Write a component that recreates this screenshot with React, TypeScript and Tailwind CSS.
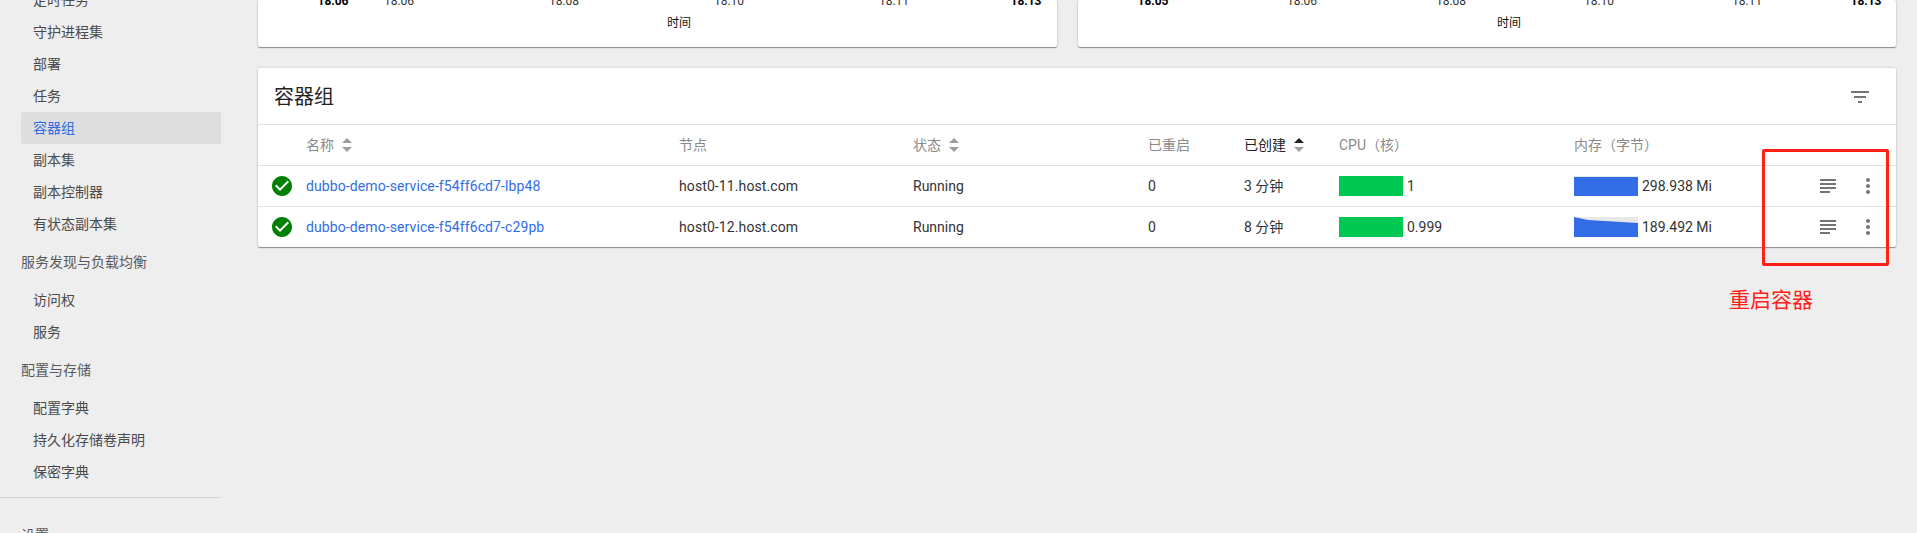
import { MdCheckCircle, MdFilterList, MdMoreVert, MdSubject } from "react-icons/md"

const cardShadow = "shadow-[0_1px_1px_0_rgba(0,0,0,0.38),0_0_3px_0_rgba(0,0,0,0.16)]"

const workloads = ["定时任务", "守护进程集", "部署", "任务", "容器组", "副本集", "副本控制器", "有状态副本集"]
const discovery = ["访问权", "服务"]
const storage = ["配置字典", "持久化存储卷声明", "保密字典"]

const columns = "grid grid-cols-[48px_373px_234px_235px_96px_95px_235px_1fr_auto] items-center"

const pods = [
  { name: "dubbo-demo-service-f54ff6cd7-lbp48", node: "host0-11.host.com", age: "3 分钟", cpu: "1", memory: "298.938 Mi", memTop: "0,1 64,1 64,20 0,20" },
  { name: "dubbo-demo-service-f54ff6cd7-c29pb", node: "host0-12.host.com", age: "8 分钟", cpu: "0.999", memory: "189.492 Mi", memTop: "0,0 14,3 64,6 64,20 0,20" },
]

function NavItem({ label, active }: { label: string; active?: boolean }) {
  return (
    <div className={`ml-[21px] flex h-8 items-center rounded-[2px] pl-3 text-sm ${active ? "bg-[#dedede] text-[#326de6]" : "text-[#4a4a4a]"}`}>
      {label}
    </div>
  )
}

function NavSection({ label }: { label: string }) {
  return <div className="ml-[21px] flex h-11 items-center text-sm text-[#5a5a5a]">{label}</div>
}

function Sidebar() {
  return (
    <aside className="-mt-4 w-[221px] shrink-0">
      {workloads.map((label) => (
        <NavItem key={label} label={label} active={label === "容器组"} />
      ))}
      <NavSection label="服务发现与负载均衡" />
      {discovery.map((label) => (
        <NavItem key={label} label={label} />
      ))}
      <NavSection label="配置与存储" />
      {storage.map((label) => (
        <NavItem key={label} label={label} />
      ))}
      <div className="mt-[9px] h-px bg-[#d4d4d4]" />
      <div className="mt-[15px]">
        <NavSection label="设置" />
      </div>
    </aside>
  )
}

// the bottom of a chart scrolled off the top of the page
function ChartStub({ ticks, titleX }: { ticks: { x: number; label: string; bold?: boolean }[]; titleX: number }) {
  return (
    <div className={`relative h-[47px] rounded-[2px] bg-white ${cardShadow}`}>
      <svg className="block h-full w-full">
        {ticks.map((tick) => (
          <text
            key={tick.x}
            x={tick.x}
            y={5}
            textAnchor="middle"
            fontSize={12}
            fontWeight={tick.bold ? 700 : 400}
            fill={tick.bold ? "#000" : "#333"}
          >
            {tick.label}
          </text>
        ))}
        <text x={titleX} y={27} textAnchor="middle" fontSize={12} fill="#111">
          时间
        </text>
      </svg>
    </div>
  )
}

function SortArrows({ active }: { active?: boolean }) {
  return (
    <svg width="10" height="14" viewBox="0 0 10 14" className="ml-2">
      <path d="M5 0l5 5H0z" fill={active ? "#222" : "#9e9e9e"} />
      <path d="M5 14L0 9h10z" fill="#9e9e9e" />
    </svg>
  )
}

function HeaderCell({ label, sort, active }: { label?: string; sort?: boolean; active?: boolean }) {
  return (
    <div className={`flex items-center text-sm ${active ? "text-[#222]" : "text-[#8a8a8a]"}`}>
      {label}
      {sort && <SortArrows active={active} />}
    </div>
  )
}

function PodRow({ pod }: { pod: (typeof pods)[number] }) {
  return (
    <div className={`${columns} h-[41px] border-t border-[#e0e0e0] text-sm text-[#333]`}>
      <div className="flex justify-center">
        <MdCheckCircle className="text-[#008000]" size={24} />
      </div>
      <div className="tracking-[0.1px] text-[#326de6]">{pod.name}</div>
      <div className="tracking-[0.1px]">{pod.node}</div>
      <div>Running</div>
      <div>0</div>
      <div>{pod.age}</div>
      <div className="flex items-center gap-1">
        <div className="h-5 w-16 bg-[#00c752]" />
        <span>{pod.cpu}</span>
      </div>
      <div className="flex items-center gap-1">
        <svg width="64" height="20" className="bg-[#e8e8e8]">
          <polygon points={pod.memTop} fill="#326de6" />
        </svg>
        <span>{pod.memory}</span>
      </div>
      <div className="flex justify-end gap-4 pr-4 text-[#757575]">
        <MdSubject size={24} />
        <MdMoreVert size={24} />
      </div>
    </div>
  )
}

export default function App() {
  return (
    <div className="relative flex h-[533px] overflow-hidden bg-[#eeeeee] font-['Roboto','Noto_Sans_CJK_SC',sans-serif]">
      <Sidebar />
      <main className="flex-1 pr-[21px] pl-[37px]">
        <div className="grid grid-cols-[799px_1fr] gap-[21px]">
          <ChartStub
            titleX={421}
            ticks={[
              { x: 75, label: "18:06", bold: true },
              { x: 141, label: "18:06" },
              { x: 306, label: "18:08" },
              { x: 471, label: "18:10" },
              { x: 636, label: "18:11" },
              { x: 768, label: "18:13", bold: true },
            ]}
          />
          <ChartStub
            titleX={431}
            ticks={[
              { x: 75, label: "18:05", bold: true },
              { x: 224, label: "18:06" },
              { x: 373, label: "18:08" },
              { x: 521, label: "18:10" },
              { x: 669, label: "18:11" },
              { x: 788, label: "18:13", bold: true },
            ]}
          />
        </div>

        <section className={`mt-[21px] rounded-[2px] bg-white ${cardShadow}`}>
          <div className="flex h-14 items-center justify-between pt-[2px] pr-6 pl-4">
            <h2 className="text-xl text-[#222]">容器组</h2>
            <MdFilterList className="text-[#757575]" size={24} />
          </div>
          <div className={`${columns} h-[41px] border-t border-[#e0e0e0]`}>
            <div />
            <HeaderCell label="名称" sort />
            <HeaderCell label="节点" />
            <HeaderCell label="状态" sort />
            <HeaderCell label="已重启" />
            <HeaderCell label="已创建" sort active />
            <HeaderCell label="CPU（核）" />
            <HeaderCell label="内存（字节）" />
            <div />
          </div>
          {pods.map((pod) => (
            <PodRow key={pod.name} pod={pod} />
          ))}
        </section>
      </main>

      {/* red annotation drawn over the screenshot */}
      <div className="absolute top-[149px] left-[1762px] h-[117px] w-[127px] rounded-[2px] border-[3px] border-[#ff2016]" />
      <div className="absolute top-[286px] left-[1729px] text-[21px] leading-7 text-[#ff2016]">重启容器</div>
    </div>
  )
}
